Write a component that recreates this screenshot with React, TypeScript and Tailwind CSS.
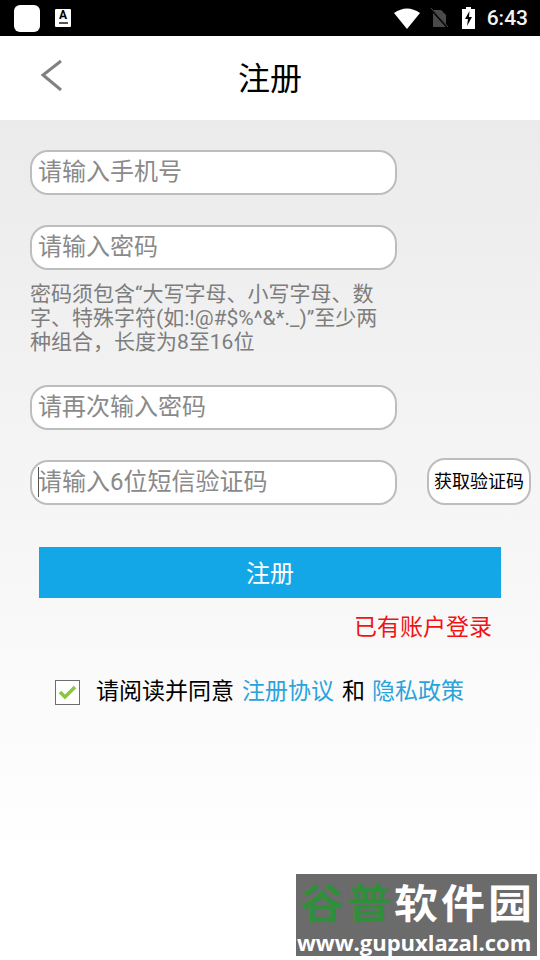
import React from 'react'

const cjk = "font-['Roboto','Noto_Sans_CJK_SC',sans-serif]"

const Field = ({ text, caret }: { text: string; caret?: boolean }) => (
  <div className="flex h-[45px] w-[367px] items-center rounded-[18px] border-2 border-[#bdbdbd] bg-white pb-[2px] pl-[6px] text-[24px] text-[#8a8a8a]">
    {caret && <span className="-mr-px h-[30px] w-px bg-[#555555]" />}
    {text}
  </div>
)

const StatusBar = () => (
  <div className="flex h-9 items-center bg-black pl-[14px] pr-[12px]">
    <div className="h-[27px] w-[26px] rounded-[6px] bg-white" />
    <div className="ml-[15px] flex h-[18px] w-[16px] flex-col items-center rounded-[1px] bg-white">
      <span className="text-[12px] leading-[13px] font-bold text-black">A</span>
      <span className="h-[2px] w-[9px] bg-[#555555]" />
    </div>
    <div className="ml-auto flex items-center">
      <svg width="26" height="21" viewBox="0 0 26 21">
        <path d="M0 5 Q13 -4 26 5 L13 21 Z" fill="#fff" />
      </svg>
      <svg className="ml-[9px]" width="20" height="22" viewBox="0 0 20 22">
        <path d="M4 3 H12 L17 8 V20 H4 Z" fill="#4a4a4a" />
        <path d="M1 1 L19 21" stroke="#000" strokeWidth="2" />
        <path d="M2 1 L19 20" stroke="#4a4a4a" strokeWidth="1" />
      </svg>
      <svg className="ml-[13px]" width="13" height="22" viewBox="0 0 13 22">
        <path d="M4 0 H9 V2 H13 V22 H0 V2 H4 Z" fill="#fff" />
        <path d="M7.5 4 L3 12 H6 L5 19 L10 10 H7 Z" fill="#000" />
      </svg>
      <span className="ml-[12px] text-[21px] leading-none font-medium text-[#f2f2f2]">6:43</span>
    </div>
  </div>
)

const Watermark = () => (
  <div className="absolute bottom-1 right-[3px] flex h-[82px] w-[241px] flex-col overflow-hidden bg-[#6b6b6b] font-bold">
    <div className="flex h-[54px] origin-bottom scale-y-90 items-center whitespace-nowrap pl-[4px] pt-[2px] text-[44px] leading-none tracking-[3px]">
      <span className="text-[#2f8f3a]">谷普</span>
      <span className="text-white">软件园</span>
    </div>
    <div className="whitespace-nowrap pl-[1px] text-[22px] leading-[28px] text-white font-['Open_Sans',sans-serif]">www.gupuxlazal.com</div>
  </div>
)

export default function App() {
  return (
    <div className={`relative flex h-[960px] w-[540px] flex-col overflow-hidden ${cjk}`}>
      <StatusBar />
      <header className="relative flex h-[84px] items-center justify-center bg-white pt-[2px]">
        <svg className="absolute left-[40px] top-[23px]" width="24" height="32" viewBox="0 0 24 32" fill="none">
          <path d="M21 2 L3 16 L21 31" stroke="#808080" strokeWidth="3" />
        </svg>
        <h1 className="text-[32px] font-normal text-black">注册</h1>
      </header>

      <main className="flex-1 bg-gradient-to-b from-[#ebebeb] to-white to-[88%] pt-[30px]">
        <div className="flex flex-col pl-[30px]">
          <Field text="请输入手机号" />
          <div className="mt-[30px]">
            <Field text="请输入密码" />
          </div>
          <p className="mt-[12px] w-[352px] text-[21px] leading-[24px] text-[#7d7d7d]">
            密码须包含“大写字母、小写字母、数字、特殊字符(如:!@#$%^&*._)”至少两种组合，长度为8至16位
          </p>
          <div className="mt-[31px]">
            <Field text="请再次输入密码" />
          </div>
          <div className="mt-[28px] flex items-end">
            <Field text="请输入6位短信验证码" caret />
            <button className="ml-[30px] flex h-[47px] w-[104px] items-center justify-center rounded-[18px] border-2 border-[#bdbdbd] bg-white text-[18px] text-black">
              获取验证码
            </button>
          </div>
        </div>

        <div className="mx-[39px] mt-[42px] flex h-[51px] items-center justify-center bg-[#14a7e8] pt-[2px] text-[24px] text-white">
          注册
        </div>
        <div className="mt-[15px] pr-[48px] text-right text-[23px] leading-[30px] text-[#f01414]">已有账户登录</div>

        <div className="mt-[34px] flex items-center pl-[55px] text-[23px] leading-[30px] text-black">
          <div className="flex h-[25px] w-[25px] items-center justify-center border border-[#6e6e6e] bg-white">
            <svg width="19" height="16" viewBox="0 0 19 16" fill="none">
              <path d="M2 8 L7 13 L17 3" stroke="#8cc63f" strokeWidth="3.5" />
            </svg>
          </div>
          <span className="ml-[16px]">请阅读并同意</span>
          <span className="ml-[8px] text-[#2aa3dc]">注册协议</span>
          <span className="ml-[8px]">和</span>
          <span className="ml-[7px] text-[#2aa3dc]">隐私政策</span>
        </div>
      </main>

      <Watermark />
    </div>
  )
}
